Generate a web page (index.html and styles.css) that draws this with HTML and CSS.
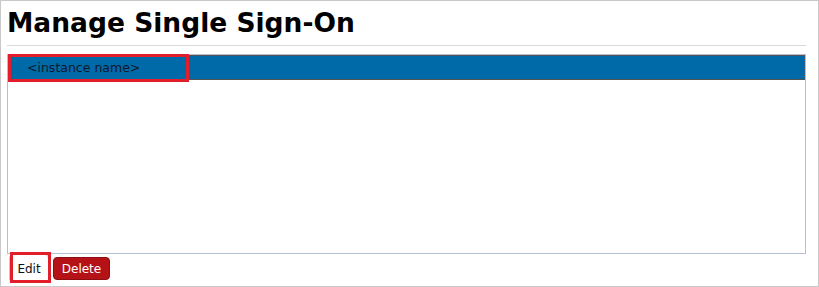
FILE: index.html
```html
<!DOCTYPE html>
<html lang="en">
<head>
    <meta charset="UTF-8">
    <meta name="viewport" content="width=device-width, initial-scale=1.0">
    <title>Manage Single Sign-On</title>
    <link rel="stylesheet" href="styles.css">
</head>
<body>
    <div class="page">
        <h1>Manage Single Sign-On</h1>
        <hr class="rule">

        <div class="list-box">
            <div class="list-row selected">
                <span class="row-text">&lt;instance name&gt;</span>
                <span class="callout callout-row"></span>
            </div>
        </div>

        <div class="actions">
            <button class="btn btn-edit">Edit<span class="callout callout-edit"></span></button>
            <button class="btn btn-delete">Delete</button>
        </div>
    </div>
</body>
</html>
```

FILE: styles.css
```css
* {
    box-sizing: border-box;
}

body {
    margin: 0;
    font-family: "DejaVu Sans", Verdana, sans-serif;
    background: white;
}

.page {
    width: 819px;
    height: 287px;
    border: 1px solid #c8c8c8;
    padding: 5px 12px 0 6px;
}

h1 {
    margin: 0;
    font-size: 26.5px;
    font-weight: bold;
    color: #000;
    line-height: 34px;
}

.rule {
    margin: 5px 0 0 0;
    border: 0;
    border-top: 1px solid #d9d9d9;
    height: 0;
}

.list-box {
    margin-top: 8px;
    height: 200px;
    border: 1px solid #b4bfd9;
}

.list-row {
    position: relative;
    height: 25px;
    display: flex;
    align-items: center;
    padding-left: 18px;
    font-size: 12.5px;
    color: #10182a;
}

.list-row.selected {
    background: #0069a8;
    border: 1px dotted #555;
}

/* red annotation boxes */
.callout {
    position: absolute;
    border: 3px solid #e31e2b;
    pointer-events: none;
}

.callout-row {
    left: -1px;
    top: -2px;
    width: 181px;
    height: 28px;
}

.actions {
    display: flex;
    align-items: center;
    gap: 4px;
    padding-left: 2px;
}

.btn {
    font-family: "DejaVu Sans", Verdana, sans-serif;
    font-size: 12px;
    border-radius: 4px;
    cursor: pointer;
}

.btn-edit {
    position: relative;
    width: 40px;
    height: 29px;
    background: white;
    color: #111;
    border: 1px solid #c8c8c8;
    padding: 0;
}

.callout-edit {
    left: 0;
    top: -3px;
    width: 41px;
    height: 31px;
}

.btn-delete {
    width: 57px;
    height: 23px;
    background: #b51218;
    color: white;
    border: 1px solid #8c0d12;
    padding: 0;
}
```
